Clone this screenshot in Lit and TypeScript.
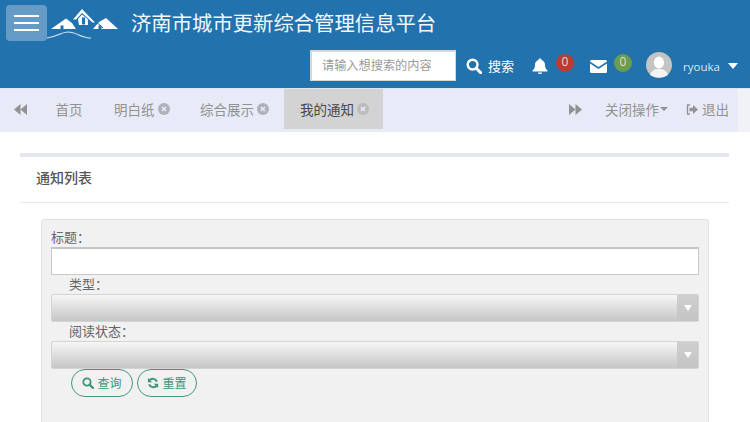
import { LitElement, html, css, svg } from "lit";
import { customElement } from "lit/decorators.js";

const search = svg`<circle cx="6.6" cy="6.6" r="4.9" fill="none" stroke="currentColor" stroke-width="2.4"/><path d="M10.2 10.2L14.6 14.6" stroke="currentColor" stroke-width="3" stroke-linecap="round"/>`;
const refresh = svg`<path d="M13.2 6.2A6 6 0 0 0 3 4.6M2.8 9.8A6 6 0 0 0 13 11.4" fill="none" stroke="currentColor" stroke-width="2.6"/><path d="M1.2 1.2V7H7ZM14.8 14.8V9H9Z" fill="currentColor"/>`;
const closeIcon = html`<svg class="x" viewBox="0 0 12 12"><circle cx="6" cy="6" r="6" fill="currentColor"/><path d="M4 4L8 8M8 4L4 8" stroke="#e8ebf7" stroke-width="1.7"/></svg>`;

@customElement("app-root")
export class AppRoot extends LitElement {
  static styles = css`
    :host { display: block; width: 750px; height: 422px; overflow: hidden; background: #fff; color: #555;
      font-family: "Open Sans", "Noto Sans CJK SC", sans-serif; font-size: 13px; }
    svg { display: block; }
    header { height: 88px; background: #2272ae; color: #fff; display: flex; flex-direction: column; }
    .top { height: 50px; display: flex; align-items: flex-start; }
    .burger { width: 41px; height: 36px; margin: 5px 0 0 6px; background: #659bc6; border-radius: 4px;
      display: flex; flex-direction: column; justify-content: center; gap: 5px; align-items: center; }
    .burger i { display: block; width: 25px; height: 2px; background: #fff; }
    .logo { margin: 8px 0 0 0; width: 74px; height: 32px; }
    h1 { margin: 11px 0 0 10px; font-size: 20.35px; line-height: 24px; font-weight: 400; white-space: nowrap; color: #f4f8fb; }
    .tools { height: 38px; display: flex; align-items: flex-start; padding-left: 310px; }
    .searchbox { box-sizing: border-box; width: 146px; height: 31px; background: #fff; border: 2px solid #d3d7da;
      border-width: 2px 1px 1px 2px; color: #9a9a9a; font-size: 12.2px; line-height: 27px; padding-left: 10px; white-space: nowrap; }
    .sbtn { display: flex; align-items: center; gap: 6px; margin: 7px 0 0 10px; font-size: 13px; line-height: 18px; }
    .sbtn svg { width: 16px; height: 16px; }
    .bell { margin: 8px 0 0 18px; width: 16px; height: 16px; }
    .badge { width: 18px; height: 18px; border-radius: 50%; font-size: 12px; line-height: 16px; text-align: center;
      margin: 4px 0 0 7px; color: #e8dcd0; }
    .red { background: #bd3b30; margin-left: 8px; }
    .green { background: #6a9d4f; }
    .mail { margin: 10px 0 0 16px; width: 17px; height: 13px; }
    .avatar { margin: 2px 0 0 14px; width: 26px; height: 26px; }
    .user { margin: 9px 0 0 11px; font-size: 11.5px; line-height: 16px; color: #dbe7f1; }
    .caret { margin: 13px 0 0 8px; width: 10px; height: 6px; }

    nav { height: 44px; background: #e8ebf7; border-top: 1px solid #d9e6f3; box-sizing: border-box; display: flex; align-items: flex-start; color: #929292; font-size: 13.5px; }
    .tab { height: 40px; display: flex; align-items: center; gap: 3px; white-space: nowrap; }
    .arrow { width: 41px; justify-content: center; }
    .arrow svg { width: 13px; height: 11px; }
    .x { width: 12px; height: 12px; color: #aeb2ba; }
    .home { width: 57px; justify-content: center; padding-right: 1px; box-sizing: border-box; }
    .t2 { width: 86px; padding-left: 16px; box-sizing: border-box; }
    .t3 { width: 100px; padding-left: 16px; box-sizing: border-box; }
    .active { width: 99px; padding-left: 16px; box-sizing: border-box; background: #d3d3d3; color: #4a4a4a; }
    .active .x { color: #bcbcbc; }
    .spacer { flex: 1; }
    .right-arrow { width: 22px; justify-content: center; margin-right: 19px; }
    .right-arrow svg { width: 13px; height: 11px; }
    .caret2 { width: 8px; height: 4px; margin-left: -2px; }
    .close { width: 64px; gap: 3px; }
    .logout { width: 68px; padding-left: 16px; gap: 4px; box-sizing: border-box; margin-left: 1px; }
    .logout svg { width: 12px; height: 11px; }
    .edge { width: 12px; height: 43px; background: #f1f2f6; }

    main { padding: 21px 21px 0 20px; }
    .card { border-top: 4px solid #e4e7ed; }
    h2 { margin: 0; height: 45px; border-bottom: 1px solid #e9e9e9; padding-left: 16px; font-size: 14px; line-height: 42px; font-weight: 500; color: #555; }
    .panel { margin: 16px 0 0 21px; width: 668px; box-sizing: border-box; height: 220px; background: #f1f1f1;
      border: 1px solid #e3e3e3; border-radius: 3px; padding: 9px 9px 0 9px; color: #666; font-size: 13px; }
    label { display: block; height: 18px; line-height: 16px; }
    .ind { padding-left: 18px; height: 16px; line-height: 14px; }
    .input { box-sizing: border-box; height: 28px; background: #fff; border: 1px solid #c8c8c8; border-top: 2px solid #c4c4c4; }
    .select { box-sizing: border-box; height: 28px; margin-top: 1px; border: 1px solid #d4d4d4; border-radius: 2px; display: flex; justify-content: flex-end;
      background: linear-gradient(#f6f6f6, #c6c6c6); }
    .drop { width: 21px; background: linear-gradient(#cfcfcf, #c4c4c4); display: flex; align-items: center; justify-content: center; }
    .drop svg { width: 8px; height: 6px; }
    .gap { margin-top: 2px; }
    .buttons { display: flex; gap: 4px; padding-left: 20px; }
    .btn { box-sizing: border-box; height: 28px; border: 1px solid #3f9a7c; border-radius: 14px; display: flex; align-items: center; justify-content: center; gap: 3px; color: #3c9578; font-size: 12px; }
    .btn svg { width: 12px; height: 12px; }
    .b1 { width: 62px; }
    .b2 { width: 60px; }
  `;

  render() {
    const drop = html`<div class="drop"><svg viewBox="0 0 8 6"><path d="M0 0H8L4 6Z" fill="#fff"/></svg></div>`;
    return html`
      <header>
        <div class="top">
          <div class="burger"><i></i><i></i><i></i></div>
          <svg class="logo" viewBox="0 0 74 32">
            <path fill="#fff" d="M4 21L19 10.5L25 15L29 21Z"/>
            <path fill="#fff" d="M26 11.5L35 1L48 14.5L45.5 14.5L35 5L29 11.5Z"/>
            <path fill="#fff" d="M31 11L35 6.5L41 11.5V17H32Z"/>
            <path fill="#fff" d="M46 21L52 14L59 10L71 21Z"/>
            <rect x="13.5" y="17.5" width="3" height="3.5" fill="#2272ae"/>
            <rect x="35" y="9.5" width="3" height="7" fill="#2272ae"/>
            <rect x="51.5" y="17.5" width="3" height="3.5" fill="#2272ae"/>
            <path d="M50 14.5L56 20" stroke="#2272ae" stroke-width="1"/>
            <path d="M0 30C10 29 14 24 21 24C30 24 34 30 44 30" fill="none" stroke="#d8e6f1" stroke-width="1.1"/>
          </svg>
          <h1>济南市城市更新综合管理信息平台</h1>
        </div>
        <div class="tools">
          <div class="searchbox">请输入想搜索的内容</div>
          <div class="sbtn"><svg viewBox="0 0 16 16">${search}</svg>搜索</div>
          <svg class="bell" viewBox="0 0 16 16"><path fill="#fff" d="M8 0.5C9 0.5 9.5 1 9.5 2C12 2.8 13 4.6 13 7C13 10 14 11 15.5 12.6V13.5H0.5V12.6C2 11 3 10 3 7C3 4.6 4 2.8 6.5 2C6.5 1 7 .5 8 .5ZM6 14.4H10C10 15.4 9 16 8 16S6 15.4 6 14.4Z"/></svg>
          <div class="badge red">0</div>
          <svg class="mail" viewBox="0 0 17 13"><rect width="17" height="13" rx="1.5" fill="#fff"/><path d="M0 2.5L8.5 8L17 2.5" fill="none" stroke="#2272ae" stroke-width="1.5"/></svg>
          <div class="badge green">0</div>
          <svg class="avatar" viewBox="0 0 26 26"><circle cx="13" cy="13" r="13" fill="#c4c4c4"/><ellipse cx="13" cy="10.5" rx="5" ry="6" fill="#fff"/><path d="M4 23C6 18 9 17 13 17S20 18 22 23Q13 28 4 23Z" fill="#f4f4f4"/></svg>
          <span class="user">ryouka</span>
          <svg class="caret" viewBox="0 0 10 6"><path d="M0 0H10L5 6Z" fill="#fff"/></svg>
        </div>
      </header>
      <nav>
        <div class="tab arrow"><svg viewBox="0 0 13 11"><path fill="currentColor" d="M6.5 0V11L0 5.5ZM13 0V11L6.5 5.5Z"/></svg></div>
        <div class="tab home">首页</div>
        <div class="tab t2">明白纸${closeIcon}</div>
        <div class="tab t3">综合展示${closeIcon}</div>
        <div class="tab active">我的通知${closeIcon}</div>
        <div class="spacer"></div>
        <div class="tab right-arrow"><svg viewBox="0 0 13 11"><path fill="currentColor" d="M0 0V11L6.5 5.5ZM6.5 0V11L13 5.5Z"/></svg></div>
        <div class="tab close">关闭操作<svg class="caret2" viewBox="0 0 8 4"><path d="M0 0H8L4 4Z" fill="currentColor"/></svg></div>
        <div class="tab logout"><svg viewBox="0 0 12 11"><path fill="none" stroke="currentColor" stroke-width="1.4" d="M4 1H1.5V10H4"/><path fill="currentColor" d="M3.5 3.8H7V1L12 5.5L7 10V7.2H3.5Z"/></svg>退出</div>
        <div class="edge"></div>
      </nav>
      <main>
        <div class="card">
          <h2>通知列表</h2>
          <div class="panel">
            <label>标题：</label>
            <div class="input"></div>
            <label class="ind gap">类型：</label>
            <div class="select">${drop}</div>
            <label class="ind gap">阅读状态：</label>
            <div class="select">${drop}</div>
            <div class="buttons">
              <div class="btn b1"><svg viewBox="0 0 16 16">${search}</svg>查询</div>
              <div class="btn b2"><svg viewBox="0 0 16 16">${refresh}</svg>重置</div>
            </div>
          </div>
        </div>
      </main>
    `;
  }
}
